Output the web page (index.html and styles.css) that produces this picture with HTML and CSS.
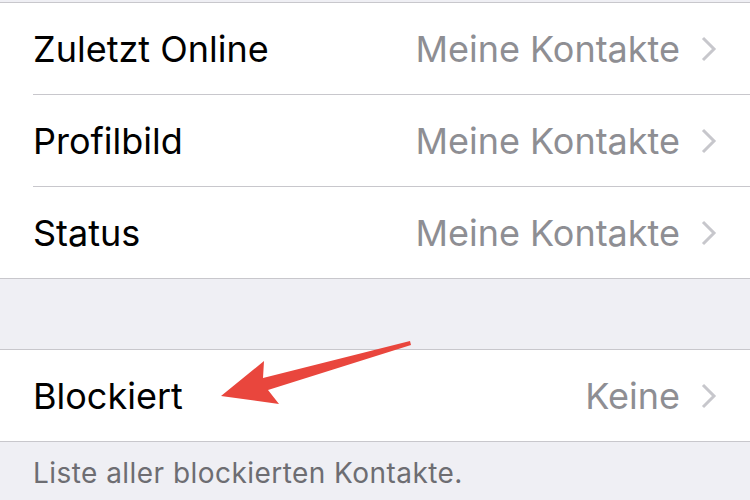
FILE: index.html
```html
<!DOCTYPE html>
<html lang="de">
<head>
  <meta charset="UTF-8">
  <title>Datenschutz</title>
  <link rel="stylesheet" href="styles.css">
</head>
<body>
  <div class="group">
    <div class="row">
      <div class="row-content">
        <span class="label">Zuletzt Online</span>
        <span class="value">Meine Kontakte</span>
        <svg class="chevron" viewBox="0 0 16 26"><path d="M2 2 L13 13 L2 24"/></svg>
      </div>
    </div>
    <div class="row">
      <div class="row-content">
        <span class="label">Profilbild</span>
        <span class="value">Meine Kontakte</span>
        <svg class="chevron" viewBox="0 0 16 26"><path d="M2 2 L13 13 L2 24"/></svg>
      </div>
    </div>
    <div class="row">
      <div class="row-content">
        <span class="label">Status</span>
        <span class="value">Meine Kontakte</span>
        <svg class="chevron" viewBox="0 0 16 26"><path d="M2 2 L13 13 L2 24"/></svg>
      </div>
    </div>
  </div>

  <div class="group group-blocked">
    <div class="row">
      <div class="row-content">
        <span class="label">Blockiert</span>
        <span class="value">Keine</span>
        <svg class="chevron" viewBox="0 0 16 26"><path d="M2 2 L13 13 L2 24"/></svg>
      </div>
    </div>
  </div>
  <p class="footer">Liste aller blockierten Kontakte.</p>

  <svg class="arrow" viewBox="0 0 750 500">
    <path d="M410 341 L263 378 L264 361 L221 396 L279 404 L268 390 L411 345 Z"/>
  </svg>
</body>
</html>
```

FILE: styles.css
```css
* {
  box-sizing: border-box;
  margin: 0;
  padding: 0;
}
body {
  background: #efeff4;
  font-family: Inter, "Noto Sans", sans-serif;
  padding-top: 2px;
  width: 750px;
  height: 500px;
  overflow: hidden;
  position: relative;
}
.group {
  background: #fff;
  border-top: 1px solid #c8c7cc;
  border-bottom: 1px solid #c8c7cc;
}
.group-blocked {
  margin-top: 70px;
}
.row {
  padding-left: 33px;
}
.row-content {
  display: flex;
  align-items: center;
  height: 92px;
  padding-right: 33px;
  border-bottom: 1px solid #c8c7cc;
}
.row:last-child .row-content {
  height: 91px;
  border-bottom: none;
}
.label {
  flex: 1;
  font-size: 36px;
  color: #000;
}
.value {
  font-size: 36px;
  color: #8e8e93;
}
.chevron {
  width: 16px;
  height: 26px;
  margin-left: 21px;
  fill: none;
  stroke: #c7c7cc;
  stroke-width: 3;
}
.footer {
  padding: 14px 33px 0;
  font-size: 28px;
  line-height: 34px;
  color: #6d6d72;
  letter-spacing: 0.45px;
}
.arrow {
  position: absolute;
  top: 0;
  left: 0;
  width: 750px;
  height: 500px;
  fill: #e9463d;
}
```
